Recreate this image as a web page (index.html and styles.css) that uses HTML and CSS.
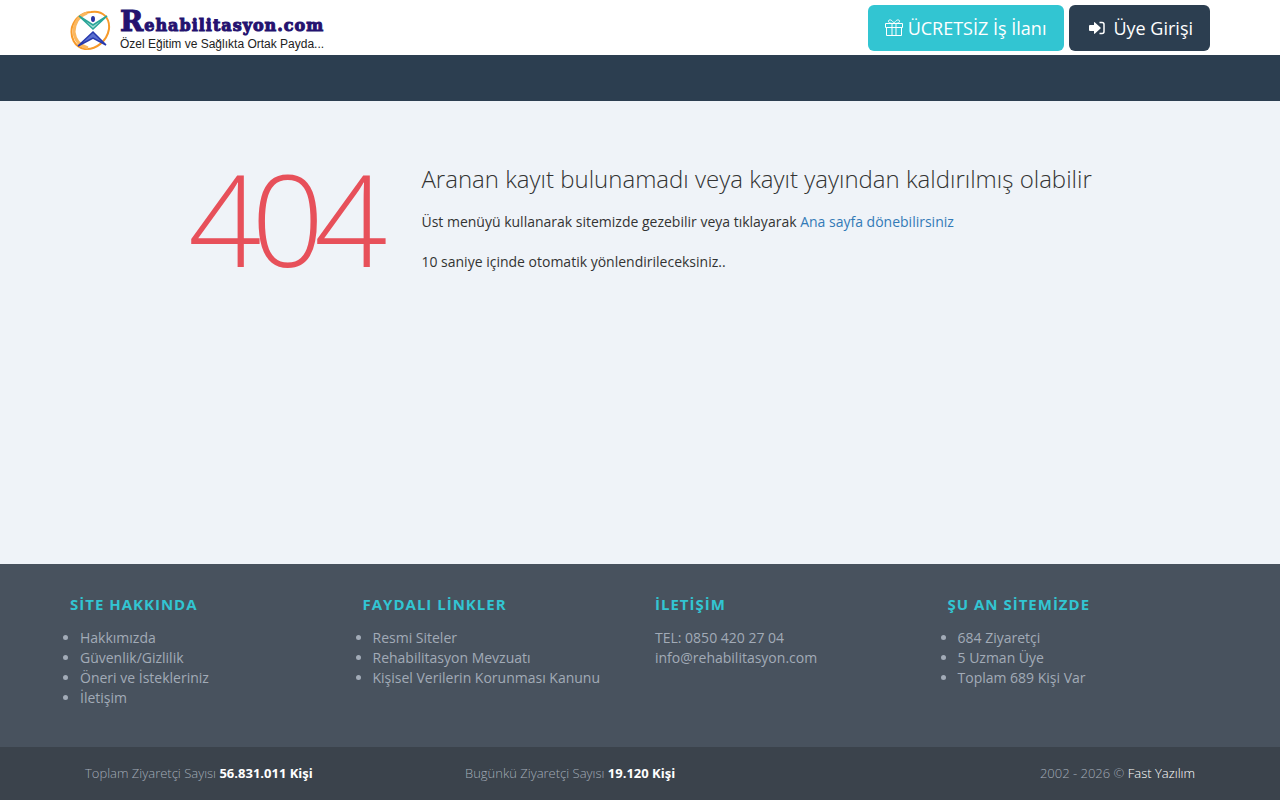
FILE: index.html
```html
<!DOCTYPE html>
<html lang="tr">
<head>
    <meta charset="UTF-8">
    <meta name="viewport" content="width=device-width, initial-scale=1.0">
    <title>Rehabilitasyon.com</title>
    <link rel="stylesheet" href="styles.css">
</head>
<body>
    <header class="page-header">
        <div class="container header-top">
            <a class="logo" href="/">
                <svg class="logo-mark" viewBox="0 0 42 42" aria-hidden="true">
                    <path d="M21 3C33 1 40 9 39 20C37 32 26 41 15 40C4 38 0 28 2 18C5 9 12 4 21 3Z" fill="none" stroke="#f79a2a" stroke-width="2"/>
                    <path d="M17 4C8 7 4 15 4 23C5 31 10 37 18 39" fill="none" stroke="#fbb75e" stroke-width="3"/>
                    <path d="M9 7L23 20L37 7L23 16Z" fill="#a5ddd5" stroke="#2aa598" stroke-width="1.5"/>
                    <ellipse cx="23" cy="10" rx="2" ry="3" fill="#2b35a0"/>
                    <path d="M8 37L23 23L36 36L23 29Z" fill="#5a6fd0" stroke="#2739ad" stroke-width="1.5"/>
                </svg>
                <span class="logo-text">
                    <span class="logo-name"><span class="logo-initial">R</span>ehabilitasyon.com</span>
                    <span class="logo-slogan">Özel Eğitim ve Sağlıkta Ortak Payda...</span>
                </span>
            </a>
            <div class="header-actions">
                <a class="btn btn-teal" href="#">
                    <svg width="18" height="18" viewBox="0 0 18 18" fill="none" stroke="currentColor" aria-hidden="true">
                        <path d="M.5 4.5h17v4H.5zM1.500 8.500h15v8h-15zM7 4.500v12M11 4.500v12M9 4.500C7 .5 4 0 3.500 2C3 4 6 4.500 9 4.500C12 4.500 15 4 14.500 2C14 0 11 .5 9 4.500Z"/>
                    </svg>
                    ÜCRETSİZ İş İlanı
                </a>
                <a class="btn btn-dark" href="#">
                    <svg width="18" height="18" viewBox="0 0 18 18" fill="currentColor" aria-hidden="true">
                        <path d="M1 7q0-1 1-1h4V4q0-1.500 1-.5L12.500 8.500q.5.500 0 1L7 14.500q-1 1-1-.5v-2H2q-1 0-1-1z"/>
                        <path d="M11.500 3.500h2.500q2 0 2 2v7q0 2-2 2h-2.500" fill="none" stroke="currentColor" stroke-width="1.500"/>
                    </svg>
                    <span class="btn-label">Üye Girişi</span>
                </a>
            </div>
        </div>
        <nav class="header-menu"></nav>
    </header>

    <main class="page-content">
        <div class="container page-404">
            <div class="number">404</div>
            <div class="details">
                <h3>Aranan kayıt bulunamadı veya kayıt yayından kaldırılmış olabilir</h3>
                <p>Üst menüyü kullanarak sitemizde gezebilir veya tıklayarak <a href="/">Ana sayfa dönebilirsiniz</a></p>
                <p>10 saniye içinde otomatik yönlendirileceksiniz..</p>
            </div>
        </div>
    </main>

    <div class="page-prefooter">
        <div class="prefooter-row">
            <section class="footer-block">
                <h2>SİTE HAKKINDA</h2>
                <ul>
                    <li><a href="#">Hakkımızda</a></li>
                    <li><a href="#">Güvenlik/Gizlilik</a></li>
                    <li><a href="#">Öneri ve İstekleriniz</a></li>
                    <li><a href="#">İletişim</a></li>
                </ul>
            </section>
            <section class="footer-block">
                <h2>FAYDALI LİNKLER</h2>
                <ul>
                    <li><a href="#">Resmi Siteler</a></li>
                    <li><a href="#">Rehabilitasyon Mevzuatı</a></li>
                    <li><a href="#">Kişisel Verilerin Korunması Kanunu</a></li>
                </ul>
            </section>
            <section class="footer-block">
                <h2>İLETİŞİM</h2>
                <address>
                    TEL: 0850 420 27 04<br>
                    <a href="mailto:info@rehabilitasyon.com">info@rehabilitasyon.com</a>
                </address>
            </section>
            <section class="footer-block">
                <h2>ŞU AN SİTEMİZDE</h2>
                <ul>
                    <li>684 Ziyaretçi</li>
                    <li>5 Uzman Üye</li>
                    <li>Toplam 689 Kişi Var</li>
                </ul>
            </section>
        </div>
    </div>

    <footer class="page-footer">
        <div class="container footer-row">
            <div>Toplam Ziyaretçi Sayısı <b>56.831.011 Kişi</b></div>
            <div>Bugünkü Ziyaretçi Sayısı <b>19.120 Kişi</b></div>
            <div class="copyright">2002 - 2026 © <a href="#">Fast Yazılım</a></div>
        </div>
    </footer>
</body>
</html>
```
FILE: styles.css
```css
* {
    box-sizing: border-box;
}

body {
    margin: 0;
    min-height: 100vh;
    display: flex;
    flex-direction: column;
    background: #eff3f8;
    font-family: "Open Sans", sans-serif;
    font-size: 14px;
    line-height: 20px;
    color: #333;
}

a {
    color: #337ab7;
    text-decoration: none;
}

.container {
    width: 100%;
    max-width: 1170px;
    margin: 0 auto;
    padding: 0 15px;
}

/* header */
.page-header {
    background: #fff;
}

.header-top {
    display: flex;
    justify-content: space-between;
    align-items: center;
    min-height: 55px;
}

.header-menu {
    height: 46px;
    background: #2c3e50;
}

.logo {
    display: flex;
    align-items: center;
    gap: 8px;
    padding-top: 4px;
}

.logo-mark {
    width: 42px;
    height: 42px;
}

.logo-text {
    display: flex;
    flex-direction: column;
    padding-top: 6px;
}

.logo-name {
    font-family: "DejaVu Serif", serif;
    font-size: 16px;
    font-weight: 700;
    line-height: 20px;
    letter-spacing: 1px;
    color: #24126f;
    -webkit-text-stroke: 1px #24126f;
}

.logo-initial {
    font-size: 28px;
    line-height: 16px;
}

.logo-slogan {
    font-family: "Liberation Sans", sans-serif;
    font-size: 12px;
    line-height: 16px;
    color: #222;
}

.header-actions {
    display: flex;
    gap: 5px;
}

.btn {
    display: flex;
    align-items: center;
    gap: 5px;
    height: 46px;
    padding: 0 17px;
    border-radius: 6px;
    font-size: 18px;
    color: #fff;
}

.btn-teal {
    padding-right: 18px;
    background: #32c5d2;
}

.btn-dark {
    gap: 7px;
    padding-left: 19px;
    background: #2c3e50;
}

/* 404 */
.page-content {
    flex: 1;
    padding: 53px 0;
}

.page-404 {
    display: flex;
    justify-content: center;
    gap: 44px;
}

.number {
    font-size: 128px;
    font-weight: 300;
    line-height: 128px;
    letter-spacing: -10px;
    color: #e7505a;
}

.details {
    padding-top: 12px;
}

.details h3 {
    margin: 0 0 20px;
    font-size: 24px;
    font-weight: 300;
    line-height: 26px;
}

.details p {
    margin: 0 0 20px;
}

/* footer */
.page-prefooter {
    padding: 30px 0;
    background: #48525e;
    color: #a2abb7;
}

.prefooter-row {
    display: grid;
    grid-template-columns: repeat(4, 1fr);
    max-width: 1170px;
    min-height: 123px;
    margin: 0 auto;
}

.footer-block {
    padding: 0 15px;
}

.footer-block h2 {
    margin: 0 0 14px;
    font-size: 15px;
    font-weight: 700;
    line-height: 20px;
    letter-spacing: 1px;
    color: #32c5d2;
}

.footer-block ul {
    margin: 0;
    padding-left: 10px;
}

.footer-block a {
    color: inherit;
}

address {
    font-style: normal;
}

.page-footer {
    padding: 16px 0 17px;
    background: #3b434c;
    font-size: 13px;
    font-weight: 300;
    color: #a2abb7;
}

.footer-row {
    display: grid;
    grid-template-columns: repeat(3, 1fr);
}

.footer-row div {
    padding: 0 15px;
}

.page-footer b {
    font-weight: 700;
    color: #fff;
}

.page-footer a {
    color: #fff;
}

.copyright {
    text-align: right;
}

@media (max-width: 768px) {
    .page-404 {
        flex-direction: column;
        align-items: center;
    }

    .prefooter-row {
        grid-template-columns: repeat(2, 1fr);
        gap: 20px 0;
    }

    .footer-row {
        grid-template-columns: 1fr;
    }

    .copyright {
        text-align: left;
    }
}
```
